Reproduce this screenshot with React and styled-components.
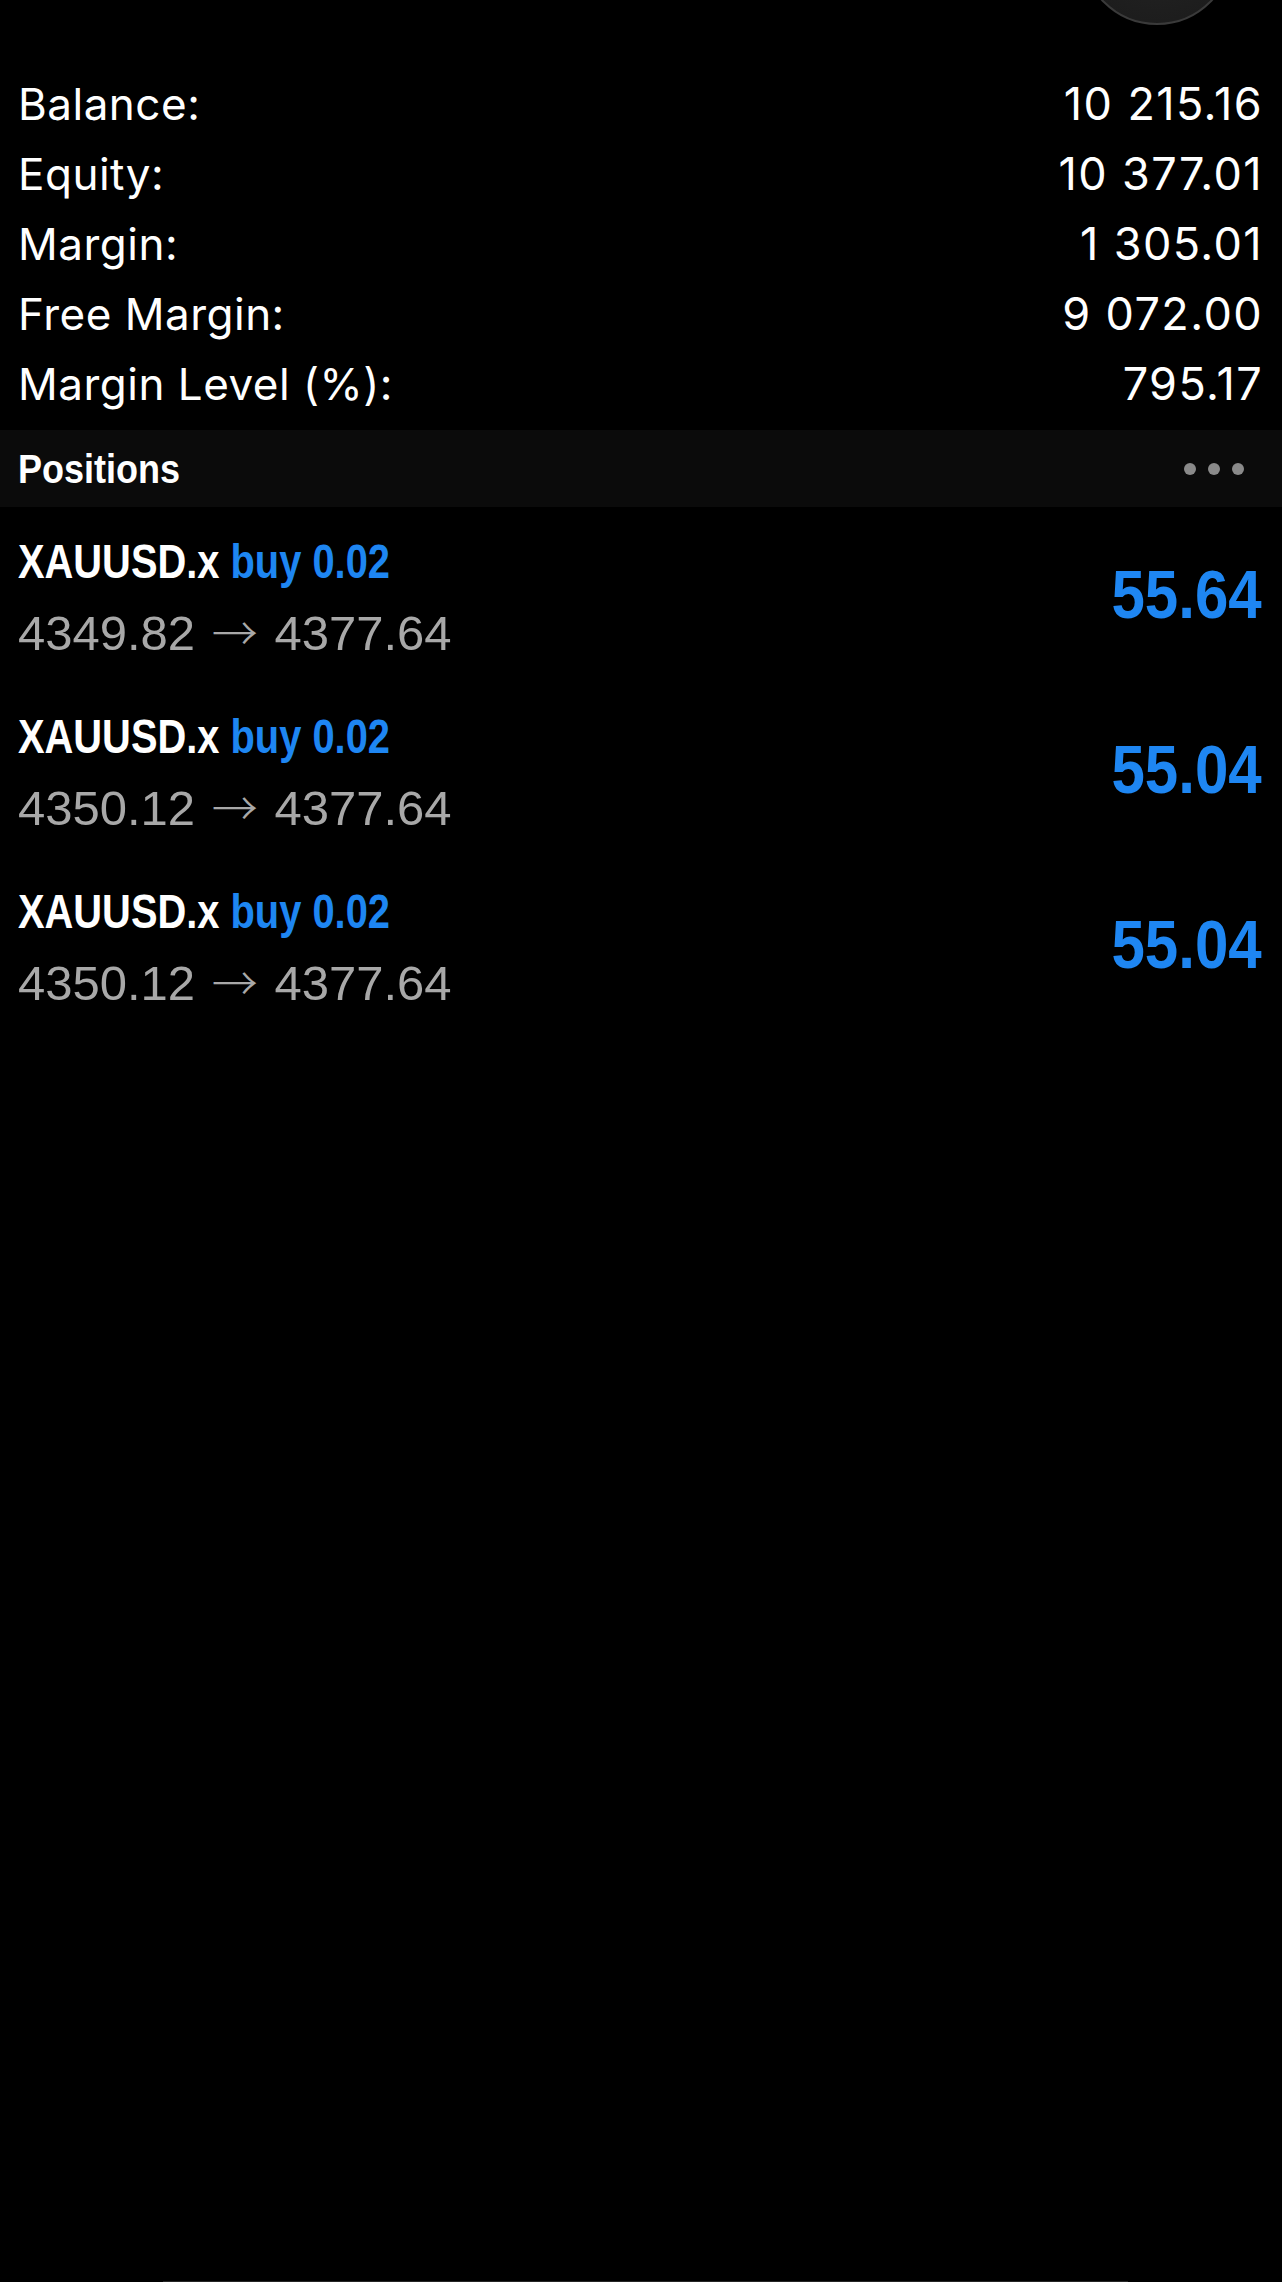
import React from "react"
import styled, { createGlobalStyle } from "styled-components"

const Global = createGlobalStyle`
  html, body {
    margin: 0;
    padding: 0;
    background: #000;
  }
  body {
    font-family: "Inter", "Liberation Sans", sans-serif;
    color: #fff;
  }
`

// no condensed face installed: bold Liberation Sans squeezed horizontally
const Condensed = styled.span`
  display: inline-block;
  white-space: nowrap;
  font-family: "Liberation Sans", Arial, sans-serif;
  font-weight: 700;
  transform: scaleX(${(p) => p.$squeeze || 0.82});
  transform-origin: ${(p) => (p.$right ? "right" : "left")} center;
`

const Screen = styled.div`
  min-height: 2282px;
  display: flex;
  flex-direction: column;
  background: #000;
  overflow: hidden;
`

const TopBar = styled.div`
  height: 69px;
  display: flex;
  justify-content: flex-end;
  padding-right: 49px;
`

const RoundButton = styled.div`
  width: 152px;
  height: 152px;
  margin-top: -127px;
  border-radius: 50%;
  box-sizing: border-box;
  background: radial-gradient(circle at 50% 40%, #262626, #1a1a1a);
  border: 2px solid #3a3a3a;
`

const Summary = styled.div`
  display: flex;
  flex-direction: column;
  padding: 0 20px 0 18px;
  margin-bottom: 11px;
`

const SummaryRow = styled.div`
  display: flex;
  justify-content: space-between;
  height: 70px;
  line-height: 70px;
  font-size: 44px;
  font-weight: 400;
`

const Label = styled.span`
  letter-spacing: 0.5px;
`

const Value = styled.span`
  font-size: 45px;
  letter-spacing: 1.4px;
  margin-right: -1px;
`

const SectionHeader = styled.div`
  height: 77px;
  background: #0b0b0b;
  display: flex;
  align-items: center;
  justify-content: space-between;
  padding: 0 38px 0 18px;
`

const SectionTitle = styled.div`
  font-size: 40px;
  line-height: 77px;
  height: 77px;
`

const Dots = styled.div`
  display: flex;
  gap: 12px;
`

const Dot = styled.span`
  width: 12px;
  height: 12px;
  border-radius: 50%;
  background: #8a8a8a;
`

const Position = styled.div`
  display: flex;
  justify-content: space-between;
  align-items: center;
  height: 175px;
  box-sizing: border-box;
  padding: 25px 20px 14px 18px;
`

const Info = styled.div`
  display: flex;
  flex-direction: column;
`

const Title = styled.div`
  height: 58px;
  font-size: 48px;
  line-height: 58px;
  color: #fff;
`

const Side = styled.span`
  color: #1e86f2;
`

const Prices = styled.div`
  margin-top: 8px;
  height: 70px;
  font-family: "Liberation Sans", Arial, sans-serif;
  font-size: 49px;
  line-height: 70px;
  color: #a8a8a8;
  white-space: nowrap;
`

const Arrow = styled.span`
  font-family: "Noto Sans CJK JP", "DejaVu Sans", sans-serif;
  font-weight: 300;
  font-size: 46px;
  line-height: 0;
  margin: 0 3px;
`

const Profit = styled.div`
  height: 70px;
  font-size: 69px;
  line-height: 70px;
  margin-bottom: 14px;
  color: ${(p) => (p.$negative ? "#e0413a" : "#1e86f2")};
`

const Spacer = styled.div`
  flex: 1;
`

const HomeLine = styled.div`
  height: 1px;
  margin: 0 154px 0 163px;
  background: #262626;
`

const summary = [
  ["Balance:", "10 215.16"],
  ["Equity:", "10 377.01"],
  ["Margin:", "1 305.01"],
  ["Free Margin:", "9 072.00"],
  ["Margin Level (%):", "795.17"],
]

const positions = [
  { symbol: "XAUUSD.x", side: "buy 0.02", open: "4349.82", current: "4377.64", profit: "55.64" },
  { symbol: "XAUUSD.x", side: "buy 0.02", open: "4350.12", current: "4377.64", profit: "55.04" },
  { symbol: "XAUUSD.x", side: "buy 0.02", open: "4350.12", current: "4377.64", profit: "55.04" },
]

function App() {
  return (
    <Screen>
      <Global />
      <TopBar>
        <RoundButton />
      </TopBar>
      <Summary>
        {summary.map(([label, value]) => (
          <SummaryRow key={label}>
            <Label>{label}</Label>
            <Value>{value}</Value>
          </SummaryRow>
        ))}
      </Summary>
      <SectionHeader>
        <SectionTitle>
          <Condensed $squeeze={0.9}>Positions</Condensed>
        </SectionTitle>
        <Dots>
          <Dot />
          <Dot />
          <Dot />
        </Dots>
      </SectionHeader>
      {positions.map((p, i) => (
        <Position key={i}>
          <Info>
            <Title>
              <Condensed $squeeze={0.83}>
                {p.symbol} <Side>{p.side}</Side>
              </Condensed>
            </Title>
            <Prices>
              {p.open} <Arrow>→</Arrow> {p.current}
            </Prices>
          </Info>
          <Profit>
            <Condensed $right $squeeze={0.87}>{p.profit}</Condensed>
          </Profit>
        </Position>
      ))}
      <Spacer />
      <HomeLine />
    </Screen>
  )
}

export default App
